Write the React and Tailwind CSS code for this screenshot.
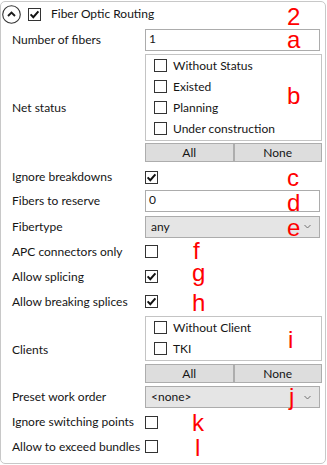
import React from 'react';

const Check = ({ checked }) => (
  <span className="w-[13px] h-[13px] border border-[#333333] bg-white flex items-center justify-center shrink-0">
    {checked && (
      <svg width="11" height="11" viewBox="0 0 11 11">
        <path d="M1.6 5.4 L4.3 8.2 L9.4 2.4" fill="none" stroke="#111" strokeWidth="2" />
      </svg>
    )}
  </span>
);

const Row = ({ label, h = 'h-[25px]', children }) => (
  <div className={`flex items-center ${h}`}>
    <div className="w-[133px] shrink-0">{label}</div>
    <div className="w-[176px] flex items-center">{children}</div>
  </div>
);

const ListBox = ({ items, h }) => (
  <div className={`w-[177px] ${h} border border-[#c4c4c4] bg-white pl-[8px]`}>
    {items.map((it) => (
      <div key={it} className="h-[21px] flex items-center gap-[6px]">
        <Check />
        <span>{it}</span>
      </div>
    ))}
  </div>
);

const AllNone = () => (
  <div className="flex w-[177px] h-[19px] mt-[2px]">
    <button className="flex-1 bg-[#dddddd] border border-[#adadad] leading-none">All</button>
    <button className="flex-1 bg-[#dddddd] border border-[#adadad] leading-none">None</button>
  </div>
);

const Select = ({ value }) => (
  <div className="w-[175px] h-[22px] bg-[#e5e5e5] border border-[#acacac] flex items-center justify-between pl-[5px] pr-[8px]">
    <span>{value}</span>
    <svg width="7" height="5" viewBox="0 0 7 5">
      <path d="M0.5 1 L3.5 4 L6.5 1" fill="none" stroke="#707070" strokeWidth="1" />
    </svg>
  </div>
);

const Input = ({ value }) => (
  <div className="w-[175px] h-[22px] bg-white border border-[#acacac] flex items-center pl-[3px] pb-[2px]">
    {value}
  </div>
);

// red annotation letters laid over the form
const marks = [
  ['2', 'top-[4px] left-[287px]'],
  ['a', 'top-[27px] left-[287px]'],
  ['b', 'top-[83px] left-[287px]'],
  ['c', 'top-[165px] left-[287px]'],
  ['d', 'top-[190px] left-[287px]'],
  ['e', 'top-[215px] left-[287px]'],
  ['f', 'top-[238px] left-[193px]'],
  ['g', 'top-[260px] left-[192px]'],
  ['h', 'top-[290px] left-[192px]'],
  ['i', 'top-[327px] left-[288px]'],
  ['j', 'top-[384px] left-[289px]'],
  ['k', 'top-[410px] left-[192px]'],
  ['l', 'top-[435px] left-[195px]'],
];

export default function App() {
  return (
    <div className="relative w-[327px] h-[465px] bg-white text-[12px] text-[#151515] font-['Lato','Open_Sans',sans-serif]">
      <div className="w-[326px] h-[463px] mt-[1px] border border-[#c8c8c8] rounded-[5px]">
        {/* Header */}
        <div className="flex items-center h-[24px] pl-[1px]">
          <svg width="19" height="19" viewBox="0 0 19 19" className="shrink-0">
            <circle cx="9.5" cy="9.5" r="8.8" fill="white" stroke="#333" strokeWidth="1.1" />
            <path d="M6 11 L9.5 7.5 L13 11" fill="none" stroke="#1a1a1a" strokeWidth="1.9" />
          </svg>
          <span className="ml-[7px]"><Check checked /></span>
          <span className="ml-[10px]">Fiber Optic Routing</span>
        </div>

        <div className="pl-[11px]">
          <div className="mt-[3px]">
            <Row label="Number of fibers" h="h-[22px]"><Input value="1" /></Row>
          </div>

          <div className="flex items-center mt-[3px]">
            <div className="w-[133px] shrink-0">Net status</div>
            <div className="flex flex-col">
              <ListBox h="h-[87px]" items={['Without Status', 'Existed', 'Planning', 'Under construction']} />
              <AllNone />
            </div>
          </div>

          <div className="mt-[3px]">
            <Row label="Ignore breakdowns" h="h-[24px]"><Check checked /></Row>
          </div>
          <div className="mt-[1px]">
            <Row label="Fibers to reserve" h="h-[22px]"><Input value="0" /></Row>
          </div>
          <div className="mt-[4px]">
            <Row label="Fibertype" h="h-[21px]"><Select value="any" /></Row>
          </div>

          <div className="mt-[2px]">
            <Row label="APC connectors only"><Check /></Row>
            <Row label="Allow splicing"><Check checked /></Row>
            <Row label="Allow breaking splices"><Check checked /></Row>
          </div>

          <div className="flex items-center mt-[2px]">
            <div className="w-[133px] shrink-0">Clients</div>
            <div className="flex flex-col">
              <ListBox h="h-[45px]" items={['Without Client', 'TKI']} />
              <div className="mt-[1px]"><AllNone /></div>
            </div>
          </div>

          <div className="mt-[3px]">
            <Row label="Preset work order" h="h-[22px]"><Select value="<none>" /></Row>
          </div>

          <div className="mt-[2px]">
            <Row label="Ignore switching points" h="h-[24px]"><Check /></Row>
            <Row label="Allow to exceed bundles"><Check /></Row>
          </div>
        </div>
      </div>

      {marks.map(([t, pos]) => (
        <div key={t} className={`absolute ${pos} text-[24px] leading-[24px] text-[#ff0000] font-['Liberation_Sans',sans-serif]`}>
          {t}
        </div>
      ))}
    </div>
  );
}
